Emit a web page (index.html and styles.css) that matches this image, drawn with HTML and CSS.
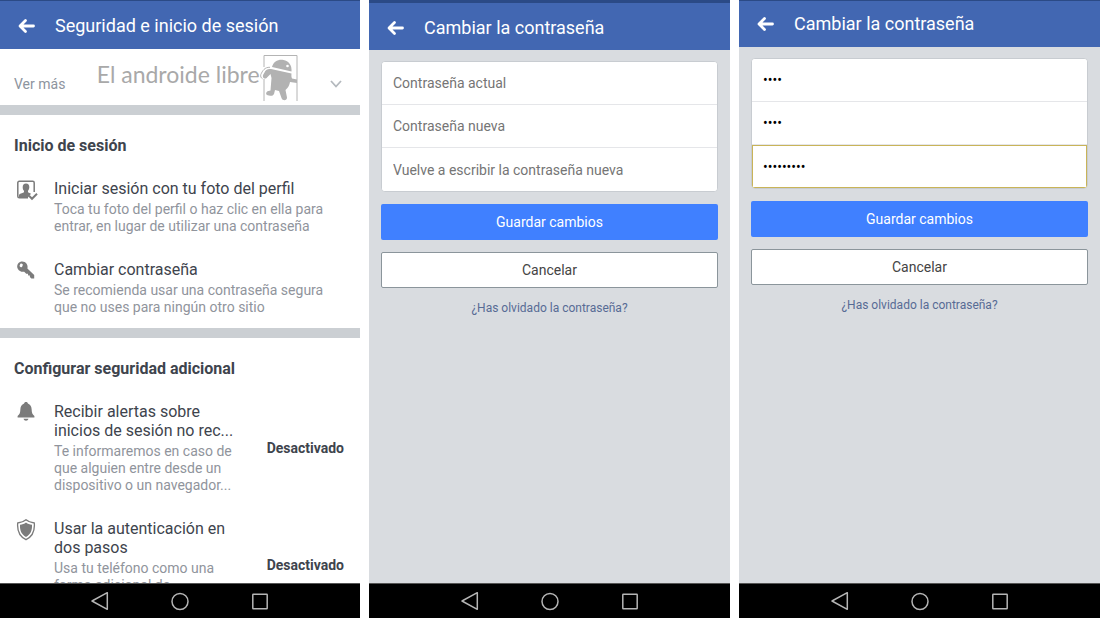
FILE: index.html
```
<!DOCTYPE html>
<html lang="es">
<head>
  <meta charset="UTF-8">
  <meta name="viewport" content="width=device-width, initial-scale=1.0">
  <title>Seguridad e inicio de sesión</title>
  <link rel="stylesheet" href="styles.css">
</head>
<body>

  <!-- shared icons -->
  <svg class="sprite" aria-hidden="true">
    <symbol id="arrow" viewBox="0 0 18 16">
      <path d="M7.500 2.500L2 8l5.500 5.500M2.500 8H15.500" fill="none" stroke="currentColor" stroke-width="2.800" stroke-linecap="round" stroke-linejoin="round"/>
    </symbol>
    <symbol id="nav-back" viewBox="0 0 20 20">
      <path d="M17.300 1.700v16.600L2 10z" fill="none" stroke="currentColor" stroke-width="1.500" stroke-linejoin="round"/>
    </symbol>
    <symbol id="nav-home" viewBox="0 0 20 20">
      <circle cx="10" cy="10.500" r="8" fill="none" stroke="currentColor" stroke-width="1.500"/>
    </symbol>
    <symbol id="nav-recent" viewBox="0 0 20 20">
      <rect x="2.800" y="3.300" width="14.400" height="14.400" rx="0.500" fill="none" stroke="currentColor" stroke-width="1.500"/>
    </symbol>
  </svg>

  <div class="screens">

    <div class="phone">
      <header class="topbar">
        <button class="back" aria-label="Atrás"><svg><use href="#arrow"/></svg></button>
        <h1>Seguridad e inicio de sesión</h1>
      </header>
      <main class="settings">
        <div class="more-row">
          <button class="more" id="more">Ver más</button>
          <div class="brand">
            <span>El androide libre</span>
            <svg viewBox="0 0 38 46">
              <path d="M4 12V.5h33V46M4 24v22" fill="none" stroke="#b4b4b4"/>
              <path d="M12 12C13.500 6.500 18.500 4 23.500 5c5 1 8.500 5 8 11.500z" fill="#b2b2b2"/>
              <circle cx="27.500" cy="11" r="1.300" fill="#fff"/>
              <path d="M11 14l20.500 4.500c-.2 2-.2 3.500.5 5l5 1v3.500l-7-1c-.5 3-2 6-4.500 8l1.500 7.500c0 3.500-4.500 3.500-5.500.5l-2.500-7-4-1-1 4c-1 2-3 2-5 1.500-4 0-3.500-4-.5-4.500l2-.5 1-12.500-1-4-3.500 3.500c-1 2-3.500 1-4-.5-.5-1.500.5-3 1.500-4.500C5.500 15 7.500 13.500 11 14z" fill="#b2b2b2"/>
              <path d="M10 12.300C4.500 12 2.500 16 .8 19.500c-.5 2 .2 3.500 1.700 4.200" fill="none" stroke="#b4b4b4"/>
            </svg>
          </div>
          <svg class="chevron" viewBox="0 0 14 10"><path d="M2 2l5 5.500L12 2" fill="none" stroke="#b4b9be" stroke-width="1.800"/></svg>
        </div>

        <section>
          <h2>Inicio de sesión</h2>
          <a class="item" href="#">
            <svg class="icon" viewBox="0 0 24 24">
              <path d="M20.200 13V3.800Q20.200 2.300 18.700 2.300H5.300Q3.800 2.300 3.800 3.800v13.400Q3.800 18.700 5.300 18.700H14" fill="none" stroke="currentColor" stroke-width="1.500"/>
              <path d="M12 4.500c2.200 0 3.500 1.600 3.300 4-.1 1.600-.8 2.500-1.300 3.200v1.600l3 1.400-3 3.800H5v-2.500c.5-1.500 3-1.700 5-2.700v-1.600c-.7-.7-1.300-1.600-1.300-3.200-.1-2.400 1.100-4 3.300-4z" fill="currentColor"/>
              <path d="M15 16.800l3 3 5-5" fill="none" stroke="currentColor" stroke-width="2"/>
            </svg>
            <span class="text">
              <span class="title">Iniciar sesión con tu foto del perfil</span>
              <span class="desc">Toca tu foto del perfil o haz clic en ella para entrar, en lugar de utilizar una contraseña</span>
            </span>
          </a>
          <a class="item" href="#">
            <svg class="icon" viewBox="0 0 24 24">
              <path fill-rule="evenodd" d="M4.300 3.200C6.500.8 10.800 1 12.600 3.800c1 1.500 1.200 3 .8 4.600l6.800 6.500v3.600h-2.800l-1.500-1.400v-1.600h-1.700l-.3-1.800h-1.700l-2-2C5.500 12.800 1 7.500 4.300 3.200zM6 4.700a1.400 1.400 0 1 0 2.400 1.200 1.400 1.400 0 1 0-2.400-1.200z" fill="currentColor"/>
            </svg>
            <span class="text">
              <span class="title">Cambiar contraseña</span>
              <span class="desc">Se recomienda usar una contraseña segura que no uses para ningún otro sitio</span>
            </span>
          </a>
        </section>

        <section>
          <h2>Configurar seguridad adicional</h2>
          <a class="item item-status" href="#">
            <svg class="icon" viewBox="0 0 24 24">
              <path d="M12 0c1.200 0 1.800.7 1.900 1.600 2.500.9 3.600 3 3.700 5.400.1 4 .9 5.500 2.800 7v1.500H3.600V14c1.900-1.500 2.700-3 2.800-7 .1-2.400 1.200-4.500 3.700-5.400C10.200.7 10.800 0 12 0zM9.500 16.800h5c-.4 1.300-1.300 2-2.500 2s-2.100-.7-2.500-2z" fill="currentColor"/>
            </svg>
            <span class="text">
              <span class="title">Recibir alertas sobre inicios de sesión no rec...</span>
              <span class="desc">Te informaremos en caso de que alguien entre desde un dispositivo o un navegador...</span>
            </span>
            <span class="status">Desactivado</span>
          </a>
          <a class="item item-status" href="#">
            <svg class="icon" viewBox="0 0 24 24">
              <path d="M12 .8c2.300 2 5 2.800 8.300 3.200.7 8-1.800 13.500-8.300 16.700C5.500 17.500 3 12 3.700 4 7 3.600 9.700 2.800 12 .8z" fill="none" stroke="currentColor" stroke-width="1.300"/>
              <path d="M12 3.500c1.800 1.400 3.700 2 6 2.300.3 6-1.500 9.700-6 12.200-4.500-2.500-6.300-6.200-6-12.200 2.300-.3 4.200-.9 6-2.300z" fill="currentColor"/>
            </svg>
            <span class="text">
              <span class="title">Usar la autenticación en dos pasos</span>
              <span class="desc">Usa tu teléfono como una forma adicional de</span>
            </span>
            <span class="status">Desactivado</span>
          </a>
        </section>
      </main>
      <nav class="navbar">
        <button aria-label="Atrás"><svg><use href="#nav-back"/></svg></button>
        <button aria-label="Inicio"><svg><use href="#nav-home"/></svg></button>
        <button aria-label="Recientes"><svg><use href="#nav-recent"/></svg></button>
      </nav>
    </div>

    <div class="phone">
      <header class="topbar topbar-tall">
        <button class="back" aria-label="Atrás"><svg><use href="#arrow"/></svg></button>
        <h1>Cambiar la contraseña</h1>
      </header>
      <main class="password">
        <form>
          <div class="fields">
            <input type="password" placeholder="Contraseña actual" aria-label="Contraseña actual">
            <input type="password" placeholder="Contraseña nueva" aria-label="Contraseña nueva">
            <input type="password" placeholder="Vuelve a escribir la contraseña nueva" aria-label="Vuelve a escribir la contraseña nueva">
          </div>
          <button class="btn btn-save" type="button">Guardar cambios</button>
          <button class="btn btn-cancel" type="button">Cancelar</button>
          <a class="forgot" href="#">¿Has olvidado la contraseña?</a>
        </form>
      </main>
      <nav class="navbar">
        <button aria-label="Atrás"><svg><use href="#nav-back"/></svg></button>
        <button aria-label="Inicio"><svg><use href="#nav-home"/></svg></button>
        <button aria-label="Recientes"><svg><use href="#nav-recent"/></svg></button>
      </nav>
    </div>

    <div class="phone">
      <header class="topbar topbar-short">
        <button class="back" aria-label="Atrás"><svg><use href="#arrow"/></svg></button>
        <h1>Cambiar la contraseña</h1>
      </header>
      <main class="password">
        <form>
          <div class="fields">
            <input type="password" value="1234" aria-label="Contraseña actual">
            <input type="password" value="1234" aria-label="Contraseña nueva">
            <input class="active" type="password" value="123456789" aria-label="Vuelve a escribir la contraseña nueva">
          </div>
          <button class="btn btn-save" type="button">Guardar cambios</button>
          <button class="btn btn-cancel" type="button">Cancelar</button>
          <a class="forgot" href="#">¿Has olvidado la contraseña?</a>
        </form>
      </main>
      <nav class="navbar">
        <button aria-label="Atrás"><svg><use href="#nav-back"/></svg></button>
        <button aria-label="Inicio"><svg><use href="#nav-home"/></svg></button>
        <button aria-label="Recientes"><svg><use href="#nav-recent"/></svg></button>
      </nav>
    </div>

  </div>

</body>
</html>
```
FILE: styles.css
```
* {
  box-sizing: border-box;
}
body {
  margin: 0;
  background-color: #fff;
  font-family: Roboto, "Liberation Sans", sans-serif;
  font-size: 14px;
  color: #3e444d;
}
button {
  font-family: inherit;
  border: 0;
  padding: 0;
  background: none;
  cursor: pointer;
}
a {
  text-decoration: none;
}
.sprite {
  display: none;
}
.screens {
  display: grid;
  grid-template-columns: 360fr 361fr 361fr;
  gap: 9px;
  height: 100vh;
}
.phone {
  display: flex;
  flex-direction: column;
  min-width: 0;
  min-height: 0;
}

/* top bar */
.topbar {
  display: flex;
  align-items: center;
  gap: 19px;
  height: 49px;
  padding: 2px 18px 0;
  border-top: 1px solid #2b4a86;
  background-color: #4267b2;
  color: #fff;
  flex-shrink: 0;
}
.topbar-tall {
  height: 50px;
  border-top-width: 3px;
}
.topbar-short {
  height: 47px;
  padding-top: 0;
}
.topbar h1 {
  margin: 0;
  font-size: 18px;
  font-weight: 400;
  line-height: 24px;
}
.back svg {
  display: block;
  width: 18px;
  height: 16px;
  color: #fff;
}

/* settings list */
.settings {
  flex: 1;
  min-height: 0;
  overflow: hidden;
}
.more-row {
  display: flex;
  align-items: flex-start;
  justify-content: space-between;
  height: 56px;
  padding: 6px 17px 0 14px;
}
.more {
  padding-top: 20px;
  font-size: 14px;
  line-height: 18px;
  color: #8d949e;
}
.brand {
  display: flex;
  font-family: Lato, sans-serif;
  font-size: 23px;
  line-height: 38px;
  color: #a9a9a9;
}
.brand svg {
  width: 38px;
  height: 46px;
}
.chevron {
  width: 14px;
  height: 10px;
  margin-top: 24px;
}
section {
  border-top: 10px solid #cbcfd3;
}
h2 {
  margin: 0;
  padding: 21px 14px 10px;
  font-size: 16px;
  font-weight: 700;
  line-height: 20px;
}
.item {
  display: flex;
  align-items: center;
  gap: 16px;
  padding: 13px 16px 12px 14px;
  color: #3e444d;
}
.icon {
  width: 24px;
  height: 24px;
  color: #7b7b7b;
  align-self: flex-start;
  flex-shrink: 0;
}
.text {
  flex: 1;
}
.title, .desc {
  display: block;
}
.title {
  margin-bottom: 3px;
  font-size: 16px;
  line-height: 19px;
}
.desc {
  font-size: 14px;
  line-height: 17px;
  color: #90949c;
}
/* always three lines high */
.item-status .desc {
  min-height: 51px;
}
.status {
  margin-left: 8px;
  font-weight: 700;
}

/* change password */
.password {
  flex: 1;
  min-height: 0;
  padding: 11px 12px;
  background-color: #d9dce0;
}
form {
  display: flex;
  flex-direction: column;
  gap: 12px;
}
.fields {
  border: 1px solid #c8ccd1;
  border-radius: 4px;
  background-color: #fff;
  overflow: hidden;
}
.fields input {
  display: block;
  width: 100%;
  height: 43px;
  padding: 0 11px;
  border: 0;
  border-bottom: 1px solid #e5e6e9;
  font-family: inherit;
  font-size: 14px;
  color: #000;
  background-color: #fff;
  outline: none;
}
.fields input:last-child {
  border-bottom: 0;
}
.fields input::placeholder {
  color: #757575;
}
.fields input.active, .fields input:focus {
  border: 1px solid #c9b458;
  padding: 0 10px;
}
.btn {
  height: 36px;
  border-radius: 2px;
  font-size: 14px;
}
.btn-save {
  background-color: #4080ff;
  color: #fff;
}
.btn-cancel {
  border: 1px solid #8b959b;
  background-color: #fff;
  color: #444;
}
.forgot {
  align-self: center;
  font-size: 12px;
  line-height: 16px;
  color: #576b95;
}

/* system buttons */
.navbar {
  display: flex;
  align-items: center;
  justify-content: center;
  gap: 60px;
  height: 35px;
  border-top: 1px solid #555;
  background-color: #000;
  flex-shrink: 0;
}
.navbar svg {
  display: block;
  width: 20px;
  height: 20px;
  color: #b5b5b5;
}
```
